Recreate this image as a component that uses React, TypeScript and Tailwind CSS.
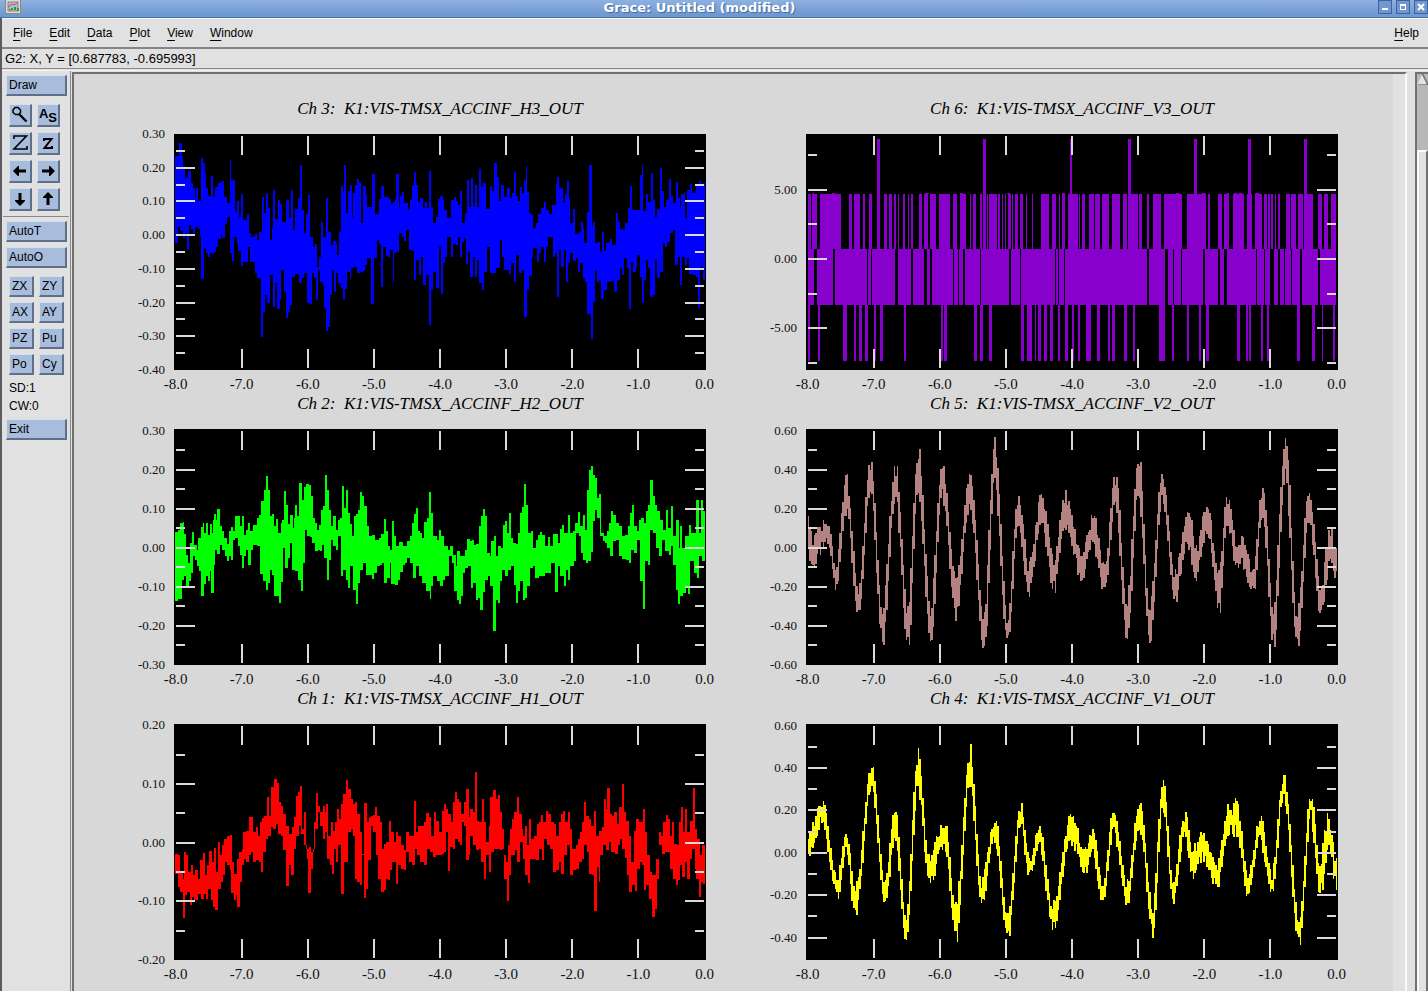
import React from "react";

type Pair = [number, number];
type Extremum = [number, number, number];

interface Channel {
  title: string;
  color: string;
  box: [number, number, number, number];
  min: number;
  max: number;
  major: number;
  labels: number[];
  path: string;
}

const parse = (s: string): Pair[] => s.trim().split(/\s+/).map((p) => p.split(":").map(Number) as Pair);

/* Stepped band between an upper and a lower profile. */
function band(upper: string, lower: string, end: number): string {
  const top = parse(upper);
  const bottom = parse(lower);
  let d = `M${top[0][0]} ${top[0][1]}`;
  top.forEach(([x, y]) => {
    d += `H${x}V${y}`;
  });
  d += `H${end}`;
  for (let i = bottom.length - 1; i >= 0; i--) d += `V${bottom[i][1]}H${bottom[i][0]}`;
  return d + "Z";
}

/* Noisy oscillation through a list of peaks and troughs: x, tip, band height. */
function wave(points: Extremum[], seed: number): string {
  let state = seed;
  const rand = () => {
    state = (state * 16807) % 2147483647;
    return state / 2147483647;
  };
  const centres = points.map(([x, y, t], i) => {
    const next = points[i + 1] ?? points[i - 1];
    return [x, y < next[1] ? y + t / 2 : y - t / 2, t] as Extremum;
  });
  const at = (x: number): Pair => {
    let i = 0;
    while (i < centres.length - 2 && centres[i + 1][0] < x) i++;
    const [x0, y0, t0] = centres[i];
    const [x1, y1, t1] = centres[i + 1];
    const u = Math.min(1, Math.max(0, (x - x0) / (x1 - x0)));
    const k = (1 - Math.cos(Math.PI * u)) / 2;
    const steep = Math.min(1, Math.abs(y1 - y0) / 300);
    const width = (t0 + (t1 - t0) * u) * (1 - 0.6 * steep * Math.sin(Math.PI * u));
    return [y0 + (y1 - y0) * k, width];
  };
  let d = "";
  for (let x = 128; x < 1533; x += 4) {
    const [ya, t] = at(x);
    const [yb] = at(x + 4);
    const top = Math.min(ya, yb) - t * (0.12 + 0.45 * rand());
    const bottom = Math.max(ya, yb) + t * (0.12 + 0.45 * rand());
    d += `M${x} ${top.toFixed(0)}H${x + 4}V${bottom.toFixed(0)}H${x}Z`;
  }
  return d;
}

function bars(ranges: string, top: number, bottom: number): string {
  return ranges
    .trim()
    .split(/\s+/)
    .map((r) => {
      const [a, b] = r.split("-");
      return `M${a} ${top}H${b}V${bottom}H${a}Z`;
    })
    .join("");
}

/* Solid strip with narrow gaps cut out. */
function strip(gaps: string, start: number, end: number, top: number, bottom: number): string {
  let x = start;
  let d = "";
  gaps.trim().split(/\s+/).forEach((g) => {
    const [a, b] = g.split("-").map(Number);
    d += `M${x} ${top}H${a}V${bottom}H${x}Z`;
    x = b;
  });
  return d + `M${x} ${top}H${end}V${bottom}H${x}Z`;
}

const H3_UP = `124:198 133:160 141:200 144:228 149:266 156:262 158:244 166:280 170:296 176:322 179:295 184:333 192:204 197:220 204:250 207:296 213:318 220:258 224:320 231:292 240:280 246:277 250:274 255:320 262:340 270:210 275:270 284:360 288:370 290:334 296:380 300:313 306:390 317:372 322:430 328:440 338:432 345:450 350:425 357:320 362:370 368:310 374:355 379:450 384:415 388:300 393:388 400:330 406:342 412:395 423:330 430:385 436:300 441:420 447:358 454:325 460:226 465:360 471:430 477:373 483:316 488:440 494:470 500:462 506:530 512:500 516:396 521:440 531:324 537:425 543:465 549:453 556:460 561:495 566:427 570:290 576:306 580:226 585:370 590:303 595:285 600:382 604:310 609:285 614:268 620:276 626:400 630:290 637:315 642:352 655:253 662:372 674:328 680:290 687:322 700:326 706:342 712:335 717:328 720:252 726:350 730:318 736:306 742:340 752:360 757:330 763:287 768:246 774:286 779:335 785:325 791:354 798:336 804:355 807:244 813:352 820:400 828:382 832:327 839:318 845:330 850:360 858:385 867:330 875:322 880:334 887:346 893:303 898:400 906:370 910:270 916:350 922:264 928:348 933:285 938:350 943:238 949:292 955:280 963:356 973:290 978:305 984:220 992:262 998:334 1004:285 1010:320 1019:296 1026:323 1032:310 1037:247 1043:318 1048:332 1053:292 1060:310 1065:270 1069:229 1073:306 1079:370 1084:376 1089:415 1096:400 1102:373 1110:354 1118:337 1125:360 1133:372 1140:345 1150:283 1155:263 1160:294 1170:340 1175:313 1180:274 1185:328 1190:400 1196:358 1202:432 1213:426 1218:397 1225:415 1228:460 1235:365 1241:226 1247:410 1252:395 1257:460 1264:456 1270:485 1274:427 1280:482 1286:458 1292:455 1298:448 1303:465 1312:370 1318:397 1325:417 1332:420 1338:400 1345:355 1350:288 1356:360 1377:256 1382:226 1387:362 1394:312 1400:336 1408:250 1413:330 1418:380 1425:357 1431:235 1436:303 1442:350 1448:330 1455:268 1462:318 1468:340 1474:277 1481:325 1486:353 1488:312 1496:307 1500:385 1506:300 1512:283 1517:310 1530:290 1537:275 1543:290 1547:280`;
const H3_LOW = `124:458 130:412 136:424 143:445 150:430 154:480 160:405 165:418 172:428 178:410 184:418 190:440 194:566 200:475 206:490 212:500 218:490 224:496 229:485 234:470 240:447 246:430 250:443 257:402 263:380 270:488 276:514 281:440 290:465 293:482 300:527 306:517 320:470 326:517 338:548 345:565 354:740 360:664 366:615 371:638 378:555 386:652 392:580 399:656 405:630 410:540 416:605 421:683 427:664 432:645 438:560 446:553 458:580 465:565 471:548 480:640 487:643 492:550 498:565 504:630 510:540 514:575 521:585 526:655 530:722 536:710 541:615 547:540 552:605 558:550 564:580 570:595 576:630 582:598 588:545 594:568 598:535 606:530 614:550 622:546 630:543 636:525 642:505 653:643 659:505 667:450 673:462 678:590 684:470 691:497 698:502 703:480 710:577 714:490 720:485 726:430 736:440 741:452 747:420 754:480 762:482 768:570 774:510 780:555 787:500 793:586 800:555 807:705 813:600 820:545 828:595 834:470 842:613 847:520 852:500 858:440 868:500 873:462 880:465 887:440 892:502 898:455 902:445 908:523 914:485 920:560 927:500 932:560 938:510 944:580 952:600 958:545 966:470 974:550 988:535 1000:450 1006:500 1012:540 1023:553 1030:520 1038:575 1044:495 1052:550 1060:540 1066:680 1072:600 1078:557 1085:505 1090:475 1099:517 1105:490 1110:470 1118:515 1124:470 1130:440 1142:500 1148:490 1153:620 1158:480 1165:530 1172:480 1178:577 1184:520 1190:490 1198:512 1205:505 1210:547 1217:520 1224:565 1230:575 1236:672 1245:745 1250:635 1256:540 1262:575 1268:570 1273:628 1280:600 1290:575 1300:572 1308:606 1316:570 1324:535 1330:555 1336:505 1342:533 1347:658 1353:515 1360:545 1366:530 1370:495 1377:560 1383:638 1388:570 1394:510 1400:535 1406:622 1413:615 1418:510 1425:565 1433:545 1440:460 1446:470 1452:455 1460:430 1466:420 1472:524 1480:500 1485:585 1491:500 1500:525 1505:505 1511:553 1520:555 1530:560 1534:653 1540:530 1547:570`;

const H2_UP = `124:428 130:422 136:400 143:398 147:432 152:495 158:520 164:460 168:428 175:466 181:480 186:445 192:412 197:400 202:430 206:400 212:435 217:402 222:430 226:390 229:374 234:392 237:358 243:410 250:425 256:445 262:462 268:425 274:412 280:425 286:378 298:410 303:380 309:435 315:422 320:400 326:425 334:405 345:385 350:375 356:333 362:300 368:258 374:300 379:380 384:374 390:410 394:388 400:430 408:400 412:390 417:303 423:345 429:403 434:376 440:415 443:385 447:345 453:380 458:280 465:330 471:293 477:282 484:286 490:318 495:385 500:400 506:420 512:405 516:362 522:348 527:256 534:300 539:360 545:410 550:380 556:420 564:390 569:385 574:290 580:355 583:300 589:370 595:402 600:440 606:380 612:372 617:360 622:308 628:320 634:350 640:410 646:440 654:435 662:450 672:445 680:432 686:388 692:425 698:470 704:480 708:394 714:440 720:470 728:456 738:470 748:455 756:440 762:400 768:372 772:356 778:425 785:430 790:445 795:396 803:385 809:306 815:370 820:440 830:450 836:420 842:440 850:470 860:480 866:470 873:495 880:530 884:483 891:500 898:498 905:480 910:447 918:455 924:450 930:465 936:462 942:410 948:380 954:357 960:378 966:490 972:500 977:455 984:440 990:500 995:468 1002:475 1008:405 1013:394 1019:430 1024:370 1030:445 1036:460 1043:463 1049:430 1054:370 1060:353 1065:282 1071:345 1076:430 1084:425 1090:475 1096:450 1102:435 1108:427 1114:435 1122:470 1130:442 1136:470 1144:433 1156:460 1162:418 1168:405 1174:430 1183:375 1188:430 1196:425 1203:400 1210:368 1216:410 1224:375 1230:420 1236:300 1240:240 1245:228 1250:255 1256:265 1262:325 1268:312 1273:430 1280:440 1288:425 1295:400 1300:363 1306:375 1312:400 1320:410 1330:440 1338:435 1345:410 1350:370 1357:345 1362:410 1370:425 1375:390 1380:385 1388:400 1394:365 1400:345 1406:270 1412:320 1418:345 1425:365 1432:390 1440:420 1448:362 1454:415 1462:350 1468:440 1475:390 1482:475 1486:410 1492:475 1500:440 1510:405 1516:430 1522:430 1529:332 1536:430 1542:330 1548:365`;
const H2_LOW = `124:635 130:628 136:628 142:570 147:560 153:595 160:575 166:550 172:500 178:510 183:530 188:545 194:620 200:583 206:560 212:575 217:545 221:610 227:525 231:480 237:493 243:465 250:480 257:500 262:515 268:500 273:510 280:450 286:445 292:470 297:495 303:535 309:500 315:480 321:525 327:480 334:465 345:470 352:553 360:575 368:600 373:580 378:540 384:555 390:618 397:620 403:640 409:578 413:475 420:535 427:505 432:460 438:540 446:545 455:570 462:605 468:520 473:420 480:440 486:442 492:460 500:485 508:480 514:485 520:465 526:505 532:570 538:510 543:450 550:470 558:480 563:440 570:560 577:540 584:570 590:595 596:530 602:600 611:642 617:580 622:540 630:520 638:555 645:555 655:568 661:550 667:530 675:525 681:520 688:580 695:565 702:520 707:583 716:585 724:570 730:548 738:525 744:520 750:505 758:520 765:565 773:530 780:560 790:580 800:603 810:628 815:590 820:560 830:575 838:588 845:570 852:560 862:500 870:520 877:605 883:630 890:642 896:620 901:550 906:535 914:530 922:595 928:580 934:632 941:625 947:660 953:608 960:570 968:560 974:588 982:723 988:630 994:640 1000:575 1006:540 1014:560 1022:540 1030:530 1037:585 1044:640 1049:605 1055:575 1062:630 1068:625 1074:590 1080:535 1088:530 1095:565 1104:560 1114:560 1122:550 1130:550 1138:520 1148:608 1156:530 1163:560 1172:590 1178:540 1183:570 1190:530 1200:515 1205:430 1212:440 1218:490 1225:510 1232:520 1238:515 1245:488 1250:395 1256:360 1262:385 1270:440 1277:455 1284:460 1290:475 1298:500 1304:455 1312:450 1320:500 1330:508 1340:510 1348:520 1354:480 1362:490 1370:450 1377:575 1386:658 1392:515 1400:525 1405:420 1412:430 1420:475 1430:500 1438:450 1446:485 1455:495 1462:470 1468:525 1475:600 1481:642 1487:620 1494:610 1502:595 1507:612 1514:515 1524:550 1532:565 1538:500 1546:515`;

const H1_UP = `124:495 130:500 137:550 143:570 148:490 153:500 159:550 165:530 171:560 178:545 184:570 190:515 197:492 203:560 208:530 215:487 222:520 227:478 233:550 238:460 244:500 250:470 256:450 262:440 270:438 276:520 283:555 290:510 295:490 303:480 307:430 315:425 322:385 328:383 334:430 340:415 346:440 352:400 358:388 364:380 371:325 377:380 383:295 390:270 397:282 403:340 409:350 415:375 422:410 430:435 438:415 443:385 449:320 455:310 460:290 466:420 471:370 477:480 484:475 490:490 497:400 503:312 509:350 515:370 521:350 527:370 531:346 537:440 543:400 549:425 555:400 560:360 566:390 572:345 577:315 583:385 585:272 591:300 597:330 603:345 609:340 615:375 622:430 628:495 634:342 640:400 646:385 652:380 658:378 663:355 669:380 675:400 681:480 687:465 693:460 699:395 706:430 713:460 718:430 724:440 732:470 740:485 746:430 754:440 762:440 768:335 773:430 778:410 786:410 794:400 800:373 807:385 814:440 822:370 828:395 836:430 843:365 849:345 855:360 860:375 868:400 873:340 878:308 884:330 890:340 896:375 903:340 909:300 915:385 920:360 926:370 932:250 938:395 944:400 951:330 957:400 963:460 970:410 974:325 981:303 988:330 994:318 1000:370 1006:420 1011:500 1016:520 1022:470 1028:420 1033:390 1039:370 1046:323 1051:375 1058:420 1063:440 1068:410 1074:470 1078:390 1084:450 1092:440 1100:405 1106:400 1110:378 1117:400 1123:365 1130:375 1137:400 1145:405 1151:440 1158:400 1164:375 1170:365 1176:400 1183:370 1189:420 1195:480 1204:470 1210:450 1216:430 1222:400 1227:340 1233:380 1240:390 1246:410 1254:365 1259:440 1266:425 1274:415 1281:330 1286:360 1290:297 1296:375 1302:380 1309:370 1315:405 1322:355 1329:285 1335:370 1341:395 1348:440 1353:520 1361:425 1367:390 1374:400 1380:400 1386:360 1392:430 1398:500 1405:550 1411:560 1418:560 1422:510 1428:430 1435:440 1440:400 1447:378 1453:390 1459:440 1464:400 1470:465 1478:470 1484:400 1488:353 1494:430 1500:360 1506:430 1512:395 1521:297 1527:420 1533:450 1540:500 1546:470`;
const H1_LOW = `124:555 130:595 136:610 144:688 150:620 156:610 162:650 168:625 174:635 180:633 186:615 192:632 200:615 207:632 213:600 219:635 225:655 232:663 240:600 246:580 252:560 258:520 264:530 270:545 275:612 282:635 288:620 291:655 297:580 303:530 309:510 315:520 322:500 328:490 334:520 342:515 350:520 355:550 361:490 368:450 375:440 382:415 388:420 395:405 401:435 408:440 415:485 423:592 430:530 437:558 443:480 450:440 458:410 464:435 472:470 478:510 482:612 489:540 495:480 501:420 508:370 514:410 521:450 528:430 534:510 540:530 546:555 552:480 558:520 564:470 571:615 578:520 585:520 590:430 597:420 604:440 608:570 615:580 622:590 628:500 633:628 639:600 645:515 651:410 658:430 664:500 670:570 678:610 686:605 692:570 698:575 702:545 708:520 718:585 724:530 732:540 740:545 746:490 754:520 762:530 770:480 776:500 785:520 796:530 802:480 810:490 820:505 828:500 836:500 843:495 849:490 853:430 860:547 866:475 872:480 878:450 886:460 892:470 898:400 904:410 908:515 915:500 920:440 928:470 934:485 942:480 950:520 958:572 963:500 970:550 976:490 984:480 992:480 1000:485 1006:480 1012:570 1018:638 1024:560 1030:500 1040:485 1047:520 1054:460 1062:510 1068:560 1075:582 1081:510 1090:510 1098:515 1105:480 1112:515 1120:450 1128:470 1136:480 1144:550 1152:545 1158:520 1164:555 1172:500 1180:470 1190:560 1198:545 1206:540 1214:520 1222:510 1228:470 1234:490 1240:555 1248:560 1255:667 1261:535 1266:580 1271:500 1278:470 1286:485 1293:460 1300:490 1310:495 1318:470 1324:450 1330:480 1338:508 1344:560 1348:610 1356:590 1365:608 1371:540 1378:520 1384:530 1388:603 1395:590 1402:630 1410:685 1418:660 1424:570 1430:470 1438:495 1446:490 1454:490 1460:540 1468:570 1474:590 1480:575 1486:530 1490:565 1498:520 1505:570 1512:510 1518:480 1525:540 1530:570 1537:625 1543:580 1548:585`;

const V3_SPIKES = "311-319 593-601 824-831 979-987 1156-1164 1299-1306 1448-1456";
const V3_HIGH = "128-136 139-153 159-217 237-246 250-266 274-279 290-299 330-338 343-352 357-363 367-371 380-387 393-398 401-408 423-431 437-448 454-470 478-507 515-524 532-549 558-563 567-574 586-590 593-600 604-608 611-630 634-640 643-648 652-656 660-667 671-674 678-687 691-699 708-712 724-728 747-768 776-787 796-799 805-812 819-846 849-853 856-866 877-888 891-906 909-928 938-958 967-977 981-1005 1010-1018 1029-1035 1047-1068 1074-1124 1137-1188 1193-1198 1220-1230 1236-1248 1259-1289 1297-1309 1316-1335 1341-1348 1352-1357 1361-1366 1370-1374 1378-1385 1401-1411 1414-1426 1432-1445 1449-1471 1486-1496 1502-1511 1520-1533";
const V3_CAPS = "138-145 191-199 440-449 533-541 658-666 805-812 1108-1116 1175-1183 1243-1248 1262-1269 1276-1283 1317-1328";
const V3_GAPS = "144-151 196-199 286-289 295-298 361-369 401-407 436-444 454-457 513-516 526-529 540-545 585-588 664-667 691-694 784-787 792-795 810-813 1031-1034 1079-1085 1098-1103 1121-1124 1180-1183 1219-1223 1236-1243 1320-1323 1341-1344 1357-1369 1379-1385 1395-1398 1412-1416 1438-1441 1486-1489";
const V3_LOW = "128-133 154-161 221-233 250-256 264-273 279-287 303-309 319-327 383-389 481-487 489-497 569-577 587-593 609-617 694-702 712-723 731-736 741-749 757-764 773-781 792-799 813-820 830-836 846-853 869-882 898-906 925-932 938-946 970-976 992-999 1063-1078 1096-1102 1136-1141 1167-1173 1188-1194 1270-1277 1294-1299 1302-1307 1334-1339 1348-1354 1430-1437 1470-1477 1495-1499 1524-1531";

const V2_WAVE: Extremum[] = [
  [126, 345, 80], [139, 540, 110], [182, 380, 80], [203, 605, 80], [231, 235, 150], [262, 683, 70], [294, 190, 120],
  [326, 768, 120], [361, 210, 130], [394, 787, 140], [421, 160, 150], [455, 770, 130], [485, 204, 130], [522, 694, 150],
  [560, 238, 120], [597, 808, 130], [625, 142, 160], [660, 760, 70], [688, 310, 100], [717, 620, 100], [750, 305, 110],
  [782, 612, 110], [812, 296, 120], [855, 572, 100], [886, 368, 110], [917, 636, 130], [946, 238, 130], [977, 764, 140],
  [1008, 180, 140], [1037, 768, 130], [1071, 238, 110], [1105, 640, 100], [1140, 334, 130], [1160, 572, 100],
  [1190, 338, 100], [1222, 680, 160], [1244, 318, 90], [1270, 540, 90], [1278, 430, 90], [1312, 618, 90],
  [1338, 280, 100], [1366, 785, 150], [1398, 124, 150], [1429, 806, 150], [1461, 286, 120], [1492, 712, 150],
  [1518, 408, 130], [1536, 560, 80],
];

const V1_WAVE: Extremum[] = [
  [126, 420, 80], [135, 510, 90], [165, 322, 90], [208, 632, 70], [231, 425, 70], [254, 685, 90], [297, 221, 90],
  [333, 656, 80], [360, 344, 110], [389, 760, 70], [421, 180, 130], [450, 598, 110], [492, 394, 80], [522, 762, 120],
  [560, 172, 120], [590, 652, 80], [626, 382, 80], [660, 758, 90], [695, 343, 70], [718, 565, 60], [745, 413, 60],
  [779, 736, 100], [828, 358, 110], [864, 558, 80], [886, 418, 80], [912, 659, 70], [941, 347, 90], [977, 656, 80],
  [1011, 314, 110], [1045, 744, 100], [1073, 270, 90], [1100, 642, 70], [1130, 364, 90], [1153, 584, 110],
  [1175, 426, 90], [1216, 602, 80], [1248, 338, 100], [1257, 445, 100], [1269, 322, 120], [1298, 628, 70],
  [1330, 376, 90], [1362, 620, 70], [1393, 252, 80], [1435, 773, 80], [1466, 296, 100], [1490, 634, 120],
  [1512, 364, 130], [1536, 600, 80],
];

const CHANNELS: Channel[] = [
  { title: "Ch 3:  K1:VIS-TMSX_ACCINF_H3_OUT", color: "#0000ff", box: [120, 133, 1436, 706], min: -0.4, max: 0.3, major: 0.1, labels: [0.3, 0.2, 0.1, 0, -0.1, -0.2, -0.3, -0.4], path: band(H3_UP, H3_LOW, 1552) },
  {
    title: "Ch 6:  K1:VIS-TMSX_ACCINF_V3_OUT", color: "#8800cc", box: [123, 133, 1415, 706], min: -8.02, max: 9.02, major: 5, labels: [5, 0, -5],
    path: bars(V3_SPIKES, 148, 478) + bars(V3_HIGH, 312, 478) + bars(V3_CAPS, 309, 313) + strip(V3_GAPS, 128, 1533, 477, 645) + bars(V3_LOW, 644, 811),
  },
  { title: "Ch 2:  K1:VIS-TMSX_ACCINF_H2_OUT", color: "#00ff00", box: [120, 118, 1436, 708], min: -0.301, max: 0.304, major: 0.1, labels: [0.3, 0.2, 0.1, 0, -0.1, -0.2, -0.3], path: band(H2_UP, H2_LOW, 1552) },
  { title: "Ch 5:  K1:VIS-TMSX_ACCINF_V2_OUT", color: "#b58282", box: [123, 118, 1415, 708], min: -0.602, max: 0.609, major: 0.2, labels: [0.6, 0.4, 0.2, 0, -0.2, -0.4, -0.6], path: wave(V2_WAVE, 7123) },
  { title: "Ch 1:  K1:VIS-TMSX_ACCINF_H1_OUT", color: "#ff0000", box: [120, 105, 1436, 709], min: -0.2, max: 0.202, major: 0.1, labels: [0.2, 0.1, 0, -0.1, -0.2], path: band(H1_UP, H1_LOW, 1552) },
  { title: "Ch 4:  K1:VIS-TMSX_ACCINF_V1_OUT", color: "#ffff00", box: [123, 105, 1415, 709], min: -0.506, max: 0.608, major: 0.2, labels: [0.6, 0.4, 0.2, 0, -0.2, -0.4], path: wave(V1_WAVE, 4421) },
];

/* Horizontal place of the i-th whole second, inside the frame's margin. */
const column = (i: number) => `${(0.3 + i * 12.43).toFixed(2)}%`;

function Plot({ channel }: { channel: Channel }) {
  const { title, color, box, min, max, major, labels, path } = channel;
  const pos = (v: number) => `${(((max - v) / (max - min)) * 100).toFixed(2)}%`;
  const ticks: { v: number; long: boolean }[] = [];
  for (let k = Math.ceil((min / major) * 2 + 0.15); k * major * 0.5 < max - major * 0.1; k++) {
    ticks.push({ v: k * major * 0.5, long: k % 2 === 0 });
  }
  return (
    <figure className="flex flex-col">
      <figcaption className="flex h-[59px] items-center justify-center pt-2 text-[17px] leading-5 whitespace-pre italic">
        {title}
      </figcaption>
      <svg className="block h-[236px] w-full overflow-visible" role="img" aria-label={title}>
        <rect width="100%" height="100%" fill="#000" />
        <svg width="100%" height="100%" viewBox={box.join(" ")} preserveAspectRatio="none">
          <path d={path} fill={color} shapeRendering="crispEdges" />
        </svg>
        <g stroke="#d9d9d9" strokeWidth="2" shapeRendering="crispEdges">
          {[1, 2, 3, 4, 5, 6, 7].map((i) => (
            <React.Fragment key={i}>
              <line x1={column(i)} x2={column(i)} y1="2" y2="21" />
              <svg y="100%" className="overflow-visible">
                <line x1={column(i)} x2={column(i)} y1="-21" y2="-2" />
              </svg>
            </React.Fragment>
          ))}
          {ticks.map(({ v, long }) => (
            <React.Fragment key={v}>
              <line x1="2" x2={long ? 21 : 11} y1={pos(v)} y2={pos(v)} />
              <svg x="100%" className="overflow-visible">
                <line x1={long ? -21 : -11} x2="-2" y1={pos(v)} y2={pos(v)} />
              </svg>
            </React.Fragment>
          ))}
        </g>
        <g fontSize="13" textAnchor="end" fill="#111">
          {labels.map((v) => (
            <text key={v} x="-9" y={pos(v)} dy="4">
              {v.toFixed(2)}
            </text>
          ))}
        </g>
        <g fontSize="15" textAnchor="middle" fill="#111">
          {[-8, -7, -6, -5, -4, -3, -2, -1, 0].map((v) => (
            <text key={v} x={column(v + 8)} y="100%" dy="19">
              {v.toFixed(1)}
            </text>
          ))}
        </g>
      </svg>
    </figure>
  );
}

const BEVEL =
  "flex items-center border-t border-l border-r-2 border-b-2 border-t-[#d3def0] border-l-[#d3def0] border-r-[#5f6f8a] border-b-[#5f6f8a] bg-[#a8bcdb]";

function WideButton({ children }: { children: string }) {
  return (
    <button type="button" className={`${BEVEL} h-[21px] w-[61px] pl-[2px]`}>
      {children}
    </button>
  );
}

function Arrow({ turn }: { turn: string }) {
  return (
    <svg viewBox="0 0 16 16" className={`size-4 ${turn}`}>
      <path d="M1 8L6 3H7V6.500H14V9.500H7V13H6Z" fill="#000" />
    </svg>
  );
}

const ICONS: { label: string; node: React.ReactNode }[] = [
  {
    label: "Zoom",
    node: (
      <svg viewBox="0 0 18 18" className="size-[18px]" fill="none" stroke="#000">
        <path d="M4 1.500H7L9.500 4V6.500L7.500 8.500H4.500L2 6.500V4Z" strokeWidth="1.5" />
        <path d="M8 8L15.500 15.500" strokeWidth="2.4" />
      </svg>
    ),
  },
  {
    label: "Autoscale",
    node: (
      <span className="flex items-center text-[13px] leading-none font-bold">
        <span className="pb-1">A</span>
        <span className="pt-1">S</span>
      </span>
    ),
  },
  {
    label: "Zoom in",
    node: (
      <svg viewBox="0 0 18 18" className="size-[18px]" fill="none" stroke="#000" strokeWidth="1.6">
        <path d="M3 5V2H15.500L3 15H16V12" />
      </svg>
    ),
  },
  {
    label: "Zoom out",
    node: (
      <svg viewBox="0 0 18 18" className="size-[18px]" fill="none" stroke="#000" strokeWidth="2">
        <path d="M5 7V5H12.500L5.500 14H13V12" />
      </svg>
    ),
  },
  { label: "Left", node: <Arrow turn="" /> },
  { label: "Right", node: <Arrow turn="rotate-180" /> },
  { label: "Down", node: <Arrow turn="-rotate-90" /> },
  { label: "Up", node: <Arrow turn="rotate-90" /> },
];

function Toolbar() {
  return (
    <aside className="flex w-[69px] shrink-0 flex-col border-r border-[#8a8a8a] pt-[4px] pl-[4px]">
      <WideButton>Draw</WideButton>
      <div className="grid grid-cols-[23px_23px] gap-[5px] pt-2 pb-[5px] pl-[3px]">
        {ICONS.map(({ label, node }) => (
          <button key={label} type="button" aria-label={label} className={`${BEVEL} size-[23px] justify-center`}>
            {node}
          </button>
        ))}
      </div>
      <hr className="mr-px mb-[4px] -ml-[3px] border-t border-[#8a8a8a]" />
      <div className="flex flex-col gap-[5px]">
        <WideButton>AutoT</WideButton>
        <WideButton>AutoO</WideButton>
      </div>
      <div className="grid grid-cols-[25px_25px] gap-x-[5px] gap-y-[5px] pt-[8px] pl-[3px]">
        {["ZX", "ZY", "AX", "AY", "PZ", "Pu", "Po", "Cy"].map((t) => (
          <button key={t} type="button" className={`${BEVEL} h-[21px] pl-[2px]`}>
            {t}
          </button>
        ))}
      </div>
      <p className="pt-[4px] pl-[3px] leading-[18px]">SD:1</p>
      <p className="pb-[4px] pl-[3px] leading-[18px]">CW:0</p>
      <WideButton>Exit</WideButton>
    </aside>
  );
}

function TitleBar() {
  const button = "flex size-[14px] shrink-0 items-center justify-center border border-[#3d639c] bg-[#7197d0]";
  return (
    <header className="flex h-[18px] shrink-0 justify-between border-b border-[#4a70a8] bg-linear-to-b from-[#8db1e1] to-[#6c95cf]">
      <svg viewBox="0 0 16 14" className="ml-[5px] h-[14px] w-4" aria-hidden="true">
        <rect x="0.5" y="-1" width="15" height="14.500" fill="#d9d9d9" stroke="#8a8a80" />
        <rect x="3" y="2" width="10" height="9" fill="#bdb8bd" stroke="#777" strokeWidth="0.8" />
        <path d="M3 7L7 4L9 5L13 2" stroke="#b04ab0" fill="none" />
        <path d="M4 10V9H6V8H8V10ZM9 10V7H11V10ZM12 10V8H14V11H12Z" fill="#1fa52f" />
      </svg>
      <h1 className="flex h-[14px] items-center font-['DejaVu_Sans'] text-[13px] leading-none font-bold text-white [text-shadow:1px_1px_1px_#3f66a0]">
        Grace: Untitled (modified)
      </h1>
      <div className="flex w-[50px] gap-[4px] overflow-hidden">
        <button type="button" aria-label="Minimize" className={button}>
          <span className="mt-1 h-[2px] w-[6px] bg-white" />
        </button>
        <button type="button" aria-label="Maximize" className={button}>
          <span className="h-[6px] w-[6px] border border-t-2 border-white" />
        </button>
        <button type="button" aria-label="Close" className={button}>
          <svg viewBox="0 0 8 8" className="size-2" stroke="#fff" strokeWidth="2">
            <path d="M1 1L7 7M7 1L1 7" />
          </svg>
        </button>
      </div>
    </header>
  );
}

function MenuItem({ label }: { label: string }) {
  return (
    <button type="button">
      <span className="underline underline-offset-3">{label[0]}</span>
      {label.slice(1)}
    </button>
  );
}

export default function App() {
  return (
    <div className="flex h-screen flex-col overflow-hidden bg-[#e1e1e1] font-['Liberation_Sans',sans-serif] text-[12px] leading-4 text-black">
      <TitleBar />
      <div className="flex min-h-0 flex-1 flex-col border-l-2 border-[#5c5c60]">
        <nav className="flex h-[31px] shrink-0 items-center gap-[17px] border-t border-b-2 border-t-[#f6f6f6] border-b-[#858585] pr-[9px] pl-[11px]">
          {["File", "Edit", "Data", "Plot", "View", "Window"].map((m) => (
            <MenuItem key={m} label={m} />
          ))}
          <span className="ml-auto">
            <MenuItem label="Help" />
          </span>
        </nav>
        <p className="flex h-[20px] shrink-0 items-center border-b border-[#8a8a8a] pl-[3px] text-[13px]">
          G2: X, Y = [0.687783, -0.695993]
        </p>
        <div className="mt-px flex min-h-0 flex-1 border-t border-[#f4f4f4]">
          <Toolbar />
          <main className="mt-px mr-[8px] ml-px flex min-w-0 flex-1 overflow-hidden border-t-2 border-r-2 border-l-2 border-t-[#707070] border-r-[#fafafa] border-l-[#707070]">
            <div className="grid flex-1 grid-cols-2 content-start gap-x-[100px] bg-[#d8d8d8] pt-px pr-[55px] pl-[100px] font-['Liberation_Serif',serif]">
              {CHANNELS.map((c) => (
                <Plot key={c.title} channel={c} />
              ))}
            </div>
            <div className="w-[12px] shrink-0" />
          </main>
          <div className="mt-px flex w-[13px] shrink-0 flex-col border-t-2 border-l-2 border-[#707070] bg-[#b8b8b8]">
            <button type="button" aria-label="Scroll up">
              <svg viewBox="0 0 11 11" className="block size-[11px]">
                <path d="M0 11L5.500 0L11 11Z" fill="#e4e4e4" />
                <path d="M5.500 0L11 11H1" fill="none" stroke="#707070" strokeWidth="1.500" />
              </svg>
            </button>
            <div className="mt-[65px] flex-1 border-t-2 border-r-2 border-l-2 border-t-[#fafafa] border-r-[#707070] border-l-[#fafafa] bg-[#e1e1e1]" />
          </div>
        </div>
      </div>
    </div>
  );
}
